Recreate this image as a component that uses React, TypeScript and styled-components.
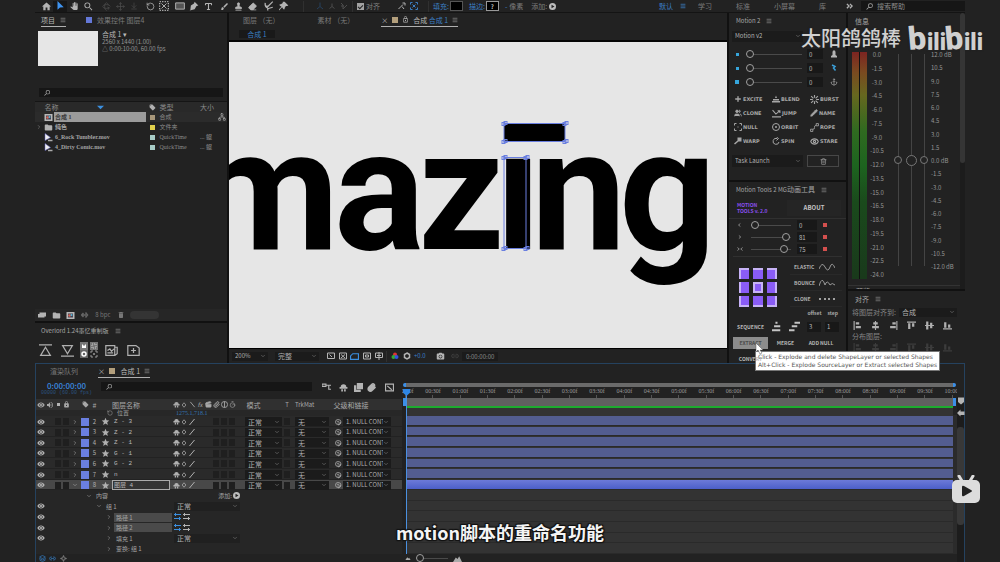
import React from "react";
import styled, { createGlobalStyle, css } from "styled-components";
import {
  MdHome, MdPanTool, MdSearch, MdBrush, MdVisibility, MdVolumeUp, MdLock, MdLockOpen,
  MdDelete, MdFolder, MdLocalOffer, MdPhotoCamera, MdStar,
} from "react-icons/md";
import {
  RotateCcw, Type, Stamp, Eraser, ChevronDown, ChevronRight, Menu, Link2, Paperclip, Layers,
  Rotate3d, Move, ArrowDownToLine, Clapperboard, Network, Plus, Trash2, Anchor, Users, Pencil,
  Eye, Sparkle, Timer,
} from "lucide-react";

const sans = `"Noto Sans CJK SC", "Noto Sans", sans-serif`;
const serif = `"Liberation Serif", "Noto Sans CJK SC", serif`;
const mono = `"Liberation Mono", "Noto Sans CJK SC", monospace`;

const Global = createGlobalStyle`
  * { box-sizing: border-box; }
  html, body, #root { height: 100%; }
  body { margin: 0; background: #222; color: #a0a0a0; font: 7px/8px ${sans}; overflow: hidden; }
  button, input, select { font: inherit; color: inherit; border: 0; padding: 0; margin: 0; background: none; border-radius: 0; }
  svg { display: block; flex: none; }
  h2 { margin: 0; font: inherit; }
`;

/* ---------- shared parts ---------- */
const Page = styled.div`
  position: relative; height: 100vh; padding: 0 35px; display: grid;
  grid-template-rows: 13px 350fr 199fr; grid-template-columns: minmax(0, 1fr); background: #222;
`;
const Panel = styled.section<{ $grow?: boolean }>`
  display: flex; flex-direction: column; min-height: 0; background: #222;
  ${(p) => p.$grow && css`flex: 1;`}
`;
const Column = styled.div`
  display: flex; flex-direction: column; gap: 2px; min-width: 0; min-height: 0;
`;
const TabBar = styled.div<{ $left?: number }>`
  display: flex; align-items: stretch; height: 15px; flex: none; padding-left: ${(p) => p.$left ?? 6}px;
`;
const Tab = styled.button<{ $active?: boolean; $gap?: number }>`
  display: flex; align-items: center; gap: 5px; white-space: nowrap; height: 14px;
  margin-right: ${(p) => p.$gap ?? 20}px; color: ${(p) => (p.$active ? "#b8b8b8" : "#7a7a7a")};
  border-bottom: 1px solid ${(p) => (p.$active ? "#b0b0b0" : "transparent")};
`;
const TightTab = styled(Tab)`gap: 4px;`;
const PanelTitle = styled.h2<{ $pad?: number }>`
  display: flex; align-items: center; gap: 6px; height: 15px; flex: none; white-space: nowrap;
  padding-left: ${(p) => p.$pad ?? 7}px; color: #a6a6a6;
`;
const Small = styled.span`font-size: 6px;`;
const Blue = styled.span`color: #3b7fc4;`;
const Chip = styled.span<{ $c: string; $s?: number }>`
  display: block; flex: none; width: ${(p) => p.$s ?? 6}px; height: ${(p) => p.$s ?? 6}px; background: ${(p) => p.$c};
`;
const IconButton = styled.button<{ $w?: number; $on?: boolean; $dim?: boolean }>`
  display: flex; align-items: center; justify-content: center; width: ${(p) => p.$w ?? 14}px; height: 11px; flex: none;
  color: ${(p) => (p.$dim ? "#4c4c4c" : "#b4b4b4")};
  ${(p) => p.$on && css`color: #3f93ef; background: #171717;`}
`;
const SelectWrap = styled.label<{ $h?: number }>`
  display: grid; align-items: center; min-width: 0; height: ${(p) => p.$h ?? 9}px; background: #1b1b1b;
  > * { grid-area: 1 / 1; }
  svg { justify-self: end; margin-right: 2px; pointer-events: none; }
`;
const NativeSelect = styled.select<{ $fs?: number }>`
  appearance: none; width: 100%; height: 100%; min-width: 0; padding: 0 8px 0 3px; outline: 0; overflow: hidden;
  font-size: ${(p) => p.$fs ?? 7}px; line-height: 8px; color: #b0b0b0;
`;
const Select = ({ value, label, h, fs }: { value: string; label: string; h?: number; fs?: number }) => (
  <SelectWrap $h={h}>
    <NativeSelect aria-label={label} $fs={fs} defaultValue={value}><option>{value}</option></NativeSelect>
    <ChevronDown size={6} color="#8a8a8a" />
  </SelectWrap>
);
const SearchBox = styled.label<{ $h?: number }>`
  display: flex; align-items: center; gap: 3px; height: ${(p) => p.$h ?? 9}px; padding-left: 4px; min-width: 0;
  background: #161616; color: #a8a8a8;
  input { flex: 1; min-width: 0; height: 100%; outline: 0; }
  input::placeholder { color: #8a8a8a; opacity: 1; }
  svg { transform: scaleX(-1); }
`;
const Range = styled.input.attrs({ type: "range" })`
  appearance: none; width: 100%; min-width: 0; height: 8px; outline: 0;
  &::-webkit-slider-runnable-track { height: 1px; background: #4a4a4a; }
  &::-webkit-slider-thumb {
    appearance: none; width: 8px; height: 8px; margin-top: -4px; border-radius: 50%;
    border: 1px solid #a0a0a0; background: #222;
  }
`;
const NumberField = styled.input`
  width: 100%; min-width: 0; height: 10px; background: #181818; padding-left: 2px; font-size: 6px; color: #b8b8b8; outline: 0;
`;
const MenuIcon = () => <Menu size={6} strokeWidth={3} color="#808080" />;

const Draw = ({ d, s = 9, fill, color, w = 2 }: { d: string; s?: number; fill?: boolean; color?: string; w?: number }) => (
  <svg width={s} height={s} viewBox="0 0 16 16" fill={fill ? "currentColor" : "none"}
    stroke={fill ? "none" : "currentColor"} strokeWidth={w} color={color}>
    <path d={d} />
  </svg>
);

/* ---------- top toolbar ---------- */
const Toolbar = styled.header`
  display: flex; align-items: center; height: 13px; padding-left: 4px; border-bottom: 1px solid #141414;
  white-space: nowrap; color: #7c7c7c;
`;
const ToolGroup = styled.div<{ $after?: number; $gap?: number }>`
  display: flex; align-items: center; gap: ${(p) => p.$gap ?? 0}px; margin-right: ${(p) => p.$after ?? 4}px; flex: none;
`;
const Divider = styled.i<{ $after?: number }>`
  width: 1px; height: 11px; background: #303030; margin-right: ${(p) => p.$after ?? 4}px; flex: none;
`;
const Check = styled.label`
  display: flex; align-items: center; gap: 2px; color: #808080;
  input { appearance: none; width: 7px; height: 7px; background: #a2a2a2; display: grid; place-items: center; }
  input:checked::after { content: ""; width: 4px; height: 2px; border: solid #222; border-width: 0 0 1px 1px; transform: rotate(-45deg); }
`;
const Swatch = styled.button`
  width: 13px; height: 10px; border: 1px solid #555; background: #000; font: bold 6px/7px ${sans}; color: #bbb;
`;
const StrokeSwatch = styled(Swatch)`border-color: #999;`;
const WorkspaceNav = styled.nav`
  margin-left: auto; display: flex; align-items: center; gap: 24px; margin-right: 20px;
  a { color: inherit; text-decoration: none; display: flex; align-items: center; gap: 7px; }
  a[aria-current] { color: #3b7fc4; margin-right: -12px; }
`;
const HelpSearch = styled.div`width: 104px; margin-left: 8px; flex: none;`;

const TopBar = () => (
  <Toolbar>
    <ToolGroup $after={4}>
      <IconButton aria-label="Home"><MdHome size={11} /></IconButton>
      <IconButton aria-label="Selection" $on>
        <Draw d="M4 0v14l4-3.500 6-.5z" s={10} fill />
      </IconButton>
      <IconButton aria-label="Hand"><MdPanTool size={8} /></IconButton>
      <IconButton aria-label="Zoom"><MdSearch size={11} /></IconButton>
    </ToolGroup>
    <ToolGroup $after={2}>
      <IconButton aria-label="Orbit" $dim><Rotate3d size={9} /></IconButton>
      <IconButton aria-label="Pan" $dim><Move size={9} /></IconButton>
      <IconButton aria-label="Dolly" $dim><ArrowDownToLine size={8} /></IconButton>
    </ToolGroup>
    <ToolGroup $after={2}>
      <IconButton aria-label="Rotate"><RotateCcw size={9} /></IconButton>
      <IconButton aria-label="Anchor point">
        <svg width="10" height="10" viewBox="0 0 16 16" fill="none" stroke="currentColor" strokeWidth="2">
          <rect x="1" y="1" width="14" height="14" strokeDasharray="2 2" /><path d="M4 4l8 8M12 4l-8 8" strokeWidth="1.500" />
        </svg>
      </IconButton>
    </ToolGroup>
    <ToolGroup $after={2}>
      <IconButton aria-label="Rectangle">
        <svg width="10" height="10" viewBox="0 0 16 16"><path d="M1 3h14v10H1z" fill="#555" stroke="#b4b4b4" strokeWidth="1.500" /></svg>
      </IconButton>
      <IconButton aria-label="Pen"><Draw d="M9 1l6 6-3 1-3 5-8 2 5-5a2 2 0 1 1 1 1l-5 4 1-8 5-3z" s={10} fill /></IconButton>
      <IconButton aria-label="Text"><Type size={9} strokeWidth={3} /></IconButton>
    </ToolGroup>
    <ToolGroup $after={2}>
      <IconButton aria-label="Brush"><MdBrush size={9} /></IconButton>
      <IconButton aria-label="Clone stamp"><Stamp size={9} fill="currentColor" /></IconButton>
      <IconButton aria-label="Eraser"><Eraser size={9} fill="currentColor" /></IconButton>
    </ToolGroup>
    <ToolGroup $after={12}>
      <IconButton aria-label="Roto brush" $w={15}><Draw d="M2 3q-1 7 4 8M5 10L14 1M7 12l7-2M2 8h4M6 11v4" s={10} /></IconButton>
      <IconButton aria-label="Puppet pin" $w={15}>
        <Draw d="M9 1l6 6-2 1-2 0-2 3 0 2-2 0-2-3-5 5-1-1 5-5-3-2 0-2 2 0 3-2 0-2z" s={10} fill />
      </IconButton>
    </ToolGroup>
    <Divider $after={10} />
    <ToolGroup $after={2}>
      <IconButton aria-label="Local axis" $dim $w={12}><Draw color="#27405c" d="M8 1v8M8 9L2 14M8 9l6 5" s={8} /></IconButton>
      <IconButton aria-label="World axis" $dim $w={12}><Draw d="M8 3v6M8 9L3 13M8 9l5 4" s={8} /></IconButton>
      <IconButton aria-label="View axis" $dim $w={12}><Draw d="M2 2l4 4v8l8-8M2 8h6" s={8} /></IconButton>
    </ToolGroup>
    <Divider $after={4} />
    <ToolGroup $after={15}>
      <Check><input type="checkbox" defaultChecked />对齐</Check>
    </ToolGroup>
    <ToolGroup $after={8}>
      <IconButton aria-label="Snap edges" $w={13}><Draw d="M1 14l5-5 4-4M9 2h5v5M8 9l4 5" s={8} /></IconButton>
      <IconButton aria-label="Snap features" $w={12}><Draw color="#3b7fc4" d="M1 5V1h4M15 5V1h-4M1 11v4h4M15 11v4h-4M5 5l6 6M11 5l-6 6" s={8} /></IconButton>
    </ToolGroup>
    <Divider $after={4} />
    <ToolGroup $after={6} $gap={1}><Blue>填充:</Blue><Swatch aria-label="Fill colour" /></ToolGroup>
    <ToolGroup $after={6} $gap={1}><Blue>描边:</Blue><StrokeSwatch aria-label="Stroke colour">?</StrokeSwatch></ToolGroup>
    <ToolGroup $after={8} $gap={2}><Blue>-</Blue>像素</ToolGroup>
    <ToolGroup $gap={2}>添加:<AddDot /></ToolGroup>
    <WorkspaceNav>
      <a href="#default" aria-current="page">默认<Menu size={6} strokeWidth={3} /></a>
      <a href="#learn">学习</a><a href="#standard">标准</a><a href="#small">小屏幕</a><a href="#library">库</a>
    </WorkspaceNav>
    <Draw d="M2 2l5 5-5 5M9 2l5 5-5 5" s={7} color="#b4b4b4" w={3} />
    <HelpSearch>
      <SearchBox $h={10}><MdSearch size={9} /><input aria-label="搜索帮助" placeholder="搜索帮助" /></SearchBox>
    </HelpSearch>
  </Toolbar>
);
const AddDot = () => (
  <svg width="7" height="7" viewBox="0 0 14 14"><circle cx="7" cy="7" r="7" fill="#bcbcbc" /><path d="M5 3.500v7L11 7z" fill="#222" /></svg>
);

/* ---------- project column ---------- */
const Workspace = styled.main`
  display: grid; grid-template-columns: 192px minmax(0, 1fr) 117px 117px; gap: 2px; background: #111; min-height: 0;
`;
const Preview = styled.div`
  display: flex; gap: 4px; padding: 3px 0 0 3px; height: 60px; flex: none; font-size: 6px; line-height: 7px;
`;
const Thumb = styled.div`width: 60px; height: 35px; background: #e6e6e6;`;
const Meta = styled.div`color: #959595; strong { font-weight: 400; color: #b8b8b8; font-size: 7px; }`;
const ProjectSearch = styled.div`padding: 0 4px 4px; border-bottom: 1px solid #151515; flex: none;`;
const FileTable = styled.table`
  border-collapse: collapse; table-layout: fixed; width: 100%; color: #8a8a8a;
  th { font-weight: 400; text-align: left; height: 10px; padding: 0; background: #292929; }
  td { height: 10px; padding: 0; white-space: nowrap; font: 6px/10px ${serif}; }
  tr[aria-selected="true"] { background: #2b2b2b; }
  svg { margin: auto; }
`;
const FileName = styled.div<{ $sel?: boolean }>`
  padding-left: 1px; height: 10px; font-weight: 700; color: #a4a4a4; font-size: 6px; line-height: 10px;
  ${(p) => p.$sel && css`background: #9b9b9b; color: #3a3a3a;`}
`;
const ChipCell = styled.td`> span { margin: auto; }`;
const HeadName = styled.span`display: flex; align-items: center; justify-content: space-between; padding-right: 3px;`;
const files = [
  { name: "合成 1", type: "合成", c: "#a8977a", icon: "comp", sel: true, size: "" },
  { name: "纯色", type: "文件夹", c: "#e0d04c", icon: "folder", sel: false, size: "" },
  { name: "6_Rock Tumbler.mov", type: "QuickTime", c: "#a6cbc6", icon: "clip", sel: false, size: "... 鲲" },
  { name: "4_Dirty Comic.mov", type: "QuickTime", c: "#a6cbc6", icon: "clip", sel: false, size: "... 鲲" },
];
const CompIcon = () => (
  <svg width="9" height="9" viewBox="0 0 18 18"><rect x="1" y="2" width="16" height="14" fill="#b8b8b8" /><rect x="4" y="5" width="10" height="8" fill="#445" /><circle cx="7" cy="9" r="2.500" fill="#d65" /><circle cx="11" cy="8" r="2" fill="#5bd" /></svg>
);
const ClipIcon = () => (
  <svg width="9" height="9" viewBox="0 0 18 18"><path d="M2 1l11 8-11 6z" fill="#eee" stroke="#66c" /><path d="M8 15h9" stroke="#aaa" strokeWidth="3" /></svg>
);
const StatusBar = styled.div`
  margin-top: auto; display: flex; align-items: center; gap: 4px; height: 12px; padding: 0 2px; background: #262626; font-size: 6px; color: #777;
`;
const Thumbbar = styled.i`width: 29px; height: 8px; border-radius: 4px; background: #343434;`;
const OverlordRow = styled.div`
  display: flex; align-items: center; gap: 8px; padding: 2px 0 0 3px; height: 22px; color: #b0b0b0;
  button { width: 14px; display: flex; justify-content: center; }
`;
const OverlordPanel = styled(Panel)`height: 40px; flex: none;`;

const ProjectColumn = () => (
  <Column>
    <Panel $grow>
      <TabBar>
        <Tab $active>项目<MenuIcon /></Tab>
        <Tab><Chip $c="#6478d8" />效果控件 图层4</Tab>
      </TabBar>
      <Preview>
        <Thumb />
        <Meta><strong>合成 1 ▾</strong><br />2560 x 1440 (1.00)<br />△ 0:00:10:00, 60.00 fps</Meta>
      </Preview>
      <ProjectSearch><SearchBox><MdSearch size={8} /><input aria-label="Search project" /></SearchBox></ProjectSearch>
      <FileTable>
        <colgroup><col width="8" /><col width="11" /><col width="92" /><col width="12" /><col width="42" /><col width="16" /><col /></colgroup>
        <thead><tr>
          <th /><th colSpan={2}><HeadName>&nbsp;名称<Draw d="M0 4h16L8 12z" fill s={7} color="#3b8fe0" /></HeadName></th>
          <th><MdLocalOffer size={7} color="#b0b0b0" /></th><th>&nbsp;类型</th><th colSpan={2}>大小</th>
        </tr></thead>
        <tbody>
          {files.map((f) => (
            <tr key={f.name} aria-selected={f.sel}>
              <td>{f.icon === "folder" && <ChevronRight size={6} />}</td>
              <td>{f.icon === "comp" ? <CompIcon /> : f.icon === "folder" ? <MdFolder size={9} color="#b0b0b0" /> : <ClipIcon />}</td>
              <td><FileName $sel={f.sel}>{f.name}</FileName></td>
              <ChipCell><Chip $c={f.c} $s={5} /></ChipCell>
              <td>&nbsp;{f.type}</td>
              {f.size ? <td colSpan={2}>{f.size}</td> : <><td /><td>{f.sel && <Network size={8} color="#aaa" />}</td></>}
            </tr>
          ))}
        </tbody>
      </FileTable>
      <StatusBar>
        <IconButton $w={10} aria-label="Interpret footage"><Draw d="M0 13V6h3V3h13v8h-3v2z" fill s={8} /></IconButton>
        <IconButton $w={10} aria-label="New folder"><MdFolder size={9} /></IconButton>
        <IconButton $w={10} aria-label="New composition"><CompIcon /></IconButton>
        <IconButton $w={11} aria-label="Settings" $dim><Draw d="M1 8h9M5 4l-4 4 4 4M9 3l4 5-4 5" s={8} w={3} color="#666" /></IconButton>
        &nbsp;8 bpc&nbsp;
        <IconButton $w={10} aria-label="Delete"><MdDelete size={8} color="#777" /></IconButton>
        <Thumbbar />
      </StatusBar>
    </Panel>
    <OverlordPanel>
      <PanelTitle $pad={6}><Small>Overlord 1.24墨忆重制版</Small><MenuIcon /></PanelTitle>
      <OverlordRow>
        <button aria-label="Push"><Draw d="M0 1h16M8 4l6 10H2z" s={13} w={1.5} /></button>
        <button aria-label="Pull"><Draw d="M0 15h16M8 12l6-10H2z" s={13} w={1.5} /></button>
        <button aria-label="Options">
          <svg width="18" height="16" viewBox="0 0 18 16">
            <rect width="8" height="8" fill="#777" /><rect x="10" width="8" height="8" fill="#777" /><rect y="8" width="8" height="8" fill="#666" />
            <path d="M2 6V2l2 2 2-2v4z" fill="#fff" /><circle cx="4" cy="12" r="2" fill="none" stroke="#fff" strokeWidth="1.500" />
            <rect x="12" y="2" width="4" height="4" fill="none" stroke="#ccc" strokeDasharray="1 1" /><path d="M11 11V9h2M15 9h2v2M11 13v2h2M15 15h2v-2M14 11v2M13 12h2" stroke="#999" fill="none" />
          </svg>
        </button>
        <button aria-label="Rig"><Draw d="M1 2h11v12H1zM12 4h3v8l-3 2M3 8l3-2 2 3 3-3M3 11h7" s={13} w={1.5} /></button>
        <button aria-label="Split"><Draw d="M1 2h10l4 3v9H1zM8 5v6M5 8h6" s={13} w={1.5} /></button>
      </OverlordRow>
    </OverlordPanel>
  </Column>
);

/* ---------- composition viewer ---------- */
const CrumbRow = styled.div`
  display: flex; padding: 2px 0 0 10px; height: 14px; border-bottom: 2px solid #060606; flex: none;
  button { width: 36px; height: 8px; background: #191919; color: #3b7fc4; line-height: 8px; }
`;
const Viewer = styled.div`
  flex: 1; min-height: 0; background: #e6e6e6; border-bottom: 1px solid #000;
  svg { width: 100%; height: 100%; }
`;
const Artwork = styled.text`font: 700 170px Roboto, sans-serif; fill: #000;`;
const ViewerBar = styled.div`
  display: flex; align-items: center; gap: 3px; height: 14px; flex: none; padding-left: 3px; font-size: 6px; color: #8c8c8c;
`;
const Slot = styled.div<{ $w: number }>`width: ${(p) => p.$w}px; margin-right: 4px; flex: none;`;
const TimeSlot = styled.output`background: #1b1b1b; padding: 0 4px; line-height: 9px; font-size: 6px;`;

const Handles = ({ x, y, w, h }: { x: number; y: number; w: number; h: number }) => (
  <g fill="none" stroke="#6a7fe0">
    <rect x={x} y={y} width={w} height={h} />
    {[[x, y], [x + w, y], [x, y + h], [x + w, y + h]].map(([cx, cy]) => (
      <g key={`${cx}-${cy}`}>
        <rect x={cx - 2} y={cy - 1} width="3" height="3" /><rect x={cx} y={cy - 2} width="3" height="3" />
      </g>
    ))}
  </g>
);

const ViewerColumn = () => (
  <Panel>
    <TabBar $left={14}>
      <Tab $gap={38}>图层 （无）</Tab>
      <Tab $gap={27}>素材 （无）</Tab>
      <TightTab $active>×<Chip $c="#b39f7c" /><MdLockOpen size={7} /><span>合成 <Blue>合成 1</Blue></span><MenuIcon /></TightTab>
    </TabBar>
    <CrumbRow><button>合成 1</button></CrumbRow>
    <Viewer>
      <svg viewBox="0 0 498 307" preserveAspectRatio="xMinYMid slice">
        <Artwork x="-37 105 189 266 302 390" y="207">mazıng</Artwork>
        <rect x="275" y="82" width="61" height="18" rx="3" />
        <Handles x={275} y={82} w={61} h={18} />
        <Handles x={275} y={116} w={22} h={91} />
      </svg>
    </Viewer>
    <ViewerBar>
      <Slot $w={36}><Select label="Magnification" value="200%" fs={6} /></Slot>
      <Slot $w={44}><Select label="Resolution" value="完整" /></Slot>
      <IconButton $w={9} aria-label="Region"><Draw d="M1 2h14v11H1zM5 5l5 5" s={8} /></IconButton>
      <IconButton $w={9} aria-label="Transparency"><Draw d="M1 2h14v12H1zM4 5l8 7M12 5l-8 7" s={8} /></IconButton>
      <IconButton $w={9} aria-label="Mask"><Draw color="#3b8fe0" d="M1 13V7l4-4h10v10z" s={9} /></IconButton>
      <IconButton $w={9} aria-label="Safe area"><Draw d="M1 2h14v12H1zM5 6h6v4H5z" s={8} /></IconButton>
      <IconButton $w={9} aria-label="Guides"><Draw d="M1 2h14v9H1zM8 0v16M4 7h8" s={8} /></IconButton>
      <Divider $after={0} />
      <IconButton $w={9} aria-label="Channels">
        <svg width="8" height="8" viewBox="0 0 16 16"><circle cx="8" cy="5" r="4" fill="#d33" /><circle cx="5" cy="10" r="4" fill="#3a3" /><circle cx="11" cy="10" r="4" fill="#35d" /></svg>
      </IconButton>
      <IconButton $w={9} aria-label="Exposure"><Draw d="M8 2l5 3v6l-5 3-5-3V5z" s={8} w={3} /></IconButton>
      <Blue>+0.0</Blue>&nbsp;
      <IconButton aria-label="Snapshot"><MdPhotoCamera size={9} /></IconButton>
      <IconButton $w={9} $dim aria-label="Show snapshot"><Link2 size={8} /></IconButton>
      <TimeSlot>0:00:00:00</TimeSlot>
    </ViewerBar>
  </Panel>
);

/* ---------- motion column ---------- */
const MotionPanel = styled(Panel)`height: 167px; flex: none;`;
const ControlRow = styled.div<{ $after?: number }>`
  display: grid; grid-template-columns: 71px 32px; gap: 4px; padding-left: 3px; margin: 2px 0 ${(p) => p.$after ?? 6}px; height: 12px; align-items: center;
`;
const EaseRow = styled.div`
  display: grid; grid-template-columns: 8px 56px 16px 12px; column-gap: 5px; height: 14px; padding-left: 4px; align-items: center; justify-items: center; flex: none;
`;
const ActionGrid = styled.div`
  display: grid; grid-template-columns: 38px 38px 38px; grid-auto-rows: 14px; margin: 3px 0 5px; padding-left: 5px;
`;
const ActionButton = styled.button`
  display: flex; align-items: center; gap: 1px; font: 700 5px/6px "DejaVu Sans", sans-serif; color: #a6a6a6; white-space: nowrap;
`;
const OutlineButton = styled.button`
  display: flex; align-items: center; justify-content: center; height: 12px; border: 1px solid #474747; color: #aaa;
`;
const actions: [string, React.ReactNode][] = [
  ["EXCITE", <Plus size={8} strokeWidth={4} />],
  ["BLEND", <Draw d="M0 12h16v3H0zM2 8h12v3H2zM6 6l2-5 2 5z" fill s={8} />],
  ["BURST", <Draw d="M8 0v5M8 11v5M0 8h5M11 8h5M2 2l4 4M10 10l4 4M14 2l-4 4M6 10l-4 4" s={9} />],
  ["CLONE", <Users size={8} fill="currentColor" />],
  ["JUMP", <Draw d="M1 2l6 7 7-6M10 3h4v4M0 14h16" s={9} />],
  ["NAME", <Pencil size={8} fill="currentColor" />],
  ["NULL", <Draw d="M1 5V1h4M15 5V1h-4M1 11v4h4M15 11v4h-4M7 8h2" s={8} />],
  ["ORBIT", <Draw d="M8 1a7 7 0 0 1 0 14M8 15A7 7 0 0 1 8 1M6 8h4M8 6v4" s={8} />],
  ["ROPE", <Draw d="M1 15v-4h4v4zM11 5V1h4v4zM5 11q4 0 3-3t3-4" s={9} w={1.5} />],
  ["WARP", <Draw d="M7 1h8v8H9l-7 6-2-2 7-6z" fill s={8} />],
  ["SPIN", <Draw d="M14 10A6 6 0 1 1 10 3M9 0l4 3-4 4" s={8} />],
  ["STARE", <Eye size={9} strokeWidth={3} />],
];

const ToolsPanel = styled(Panel)`flex: 1; background: #222; position: relative; z-index: 2;`;
const ToolsHead = styled.div`
  display: grid; grid-template-columns: 54px 54px; height: 22px; padding: 1px 4px; align-items: center;
  font-weight: 700; font-size: 6px; line-height: 5px; border-bottom: 1px solid #303030; flex: none;
  button { font-weight: 700; height: 16px; background: #252525; color: #c4c4c4; }
`;
const Brand = styled.div`color: #8a4fee; font-weight: 700; font-size: 5px; line-height: 6px; padding-left: 4px; white-space: nowrap;`;
const ToolRow = styled.div`
  display: grid; grid-template-columns: 8px 40px 20px 6px; column-gap: 6px; height: 12px; align-items: center; padding-left: 8px; flex: none;
`;
const AnchorArea = styled.div`
  display: grid; grid-template-columns: 57px 52px; border-top: 1px solid #303030; margin: 1px 4px 0; flex: none; height: 54px;
`;
const AnchorGrid = styled.div`
  display: grid; grid-template-columns: repeat(3, 10px); grid-auto-rows: 11px; gap: 3px 4px; padding: 11px 0 0 6px;
`;
const AnchorCell = styled.button<{ $edges: string }>`
  background: #8a5cf6; border-style: solid; border-color: #c7b3f7; border-width: ${(p) => p.$edges};
`;
const Curves = styled.div`display: flex; flex-direction: column; padding-top: 2px;`;
const CurveButton = styled.button`
  display: flex; align-items: center; justify-content: space-between; height: 16px; padding: 0 7px 0 4px;
  font: 700 5px/6px ${sans}; color: #b0b0b0; border-bottom: 1px solid #292929;
`;
const StepLabels = styled.div`display: flex; justify-content: flex-end; gap: 6px; padding-right: 8px; font: 700 5px/6px ${sans}; color: #aaa; height: 8px; flex: none;`;
const SeqRow = styled.div`
  display: grid; grid-template-columns: 35px 13px 14px 14px 14px; column-gap: 4px; padding-left: 4px; height: 17px; align-items: center; flex: none;
`;
const FlatRow = styled.div`
  display: grid; grid-template-columns: 35px 35px 36px; height: 16px; align-items: center; padding-left: 4px; flex: none;
`;
const FlatButton = styled.button<{ $hover?: boolean }>`
  position: relative; height: 12px; font: 700 5px/6px ${sans}; color: #b8b8b8; white-space: nowrap;
  ${(p) => p.$hover && css`background: #8c8c8c; color: #4a4a4a;`}
`;
const Tip = styled.span`
  position: absolute; left: 22px; top: 14px; padding: 1px 2px; background: #fff; border: 1px solid #777;
  color: #555; font: 400 6px/8px "DejaVu Sans", sans-serif; text-align: left; white-space: nowrap;
`;
const Cursor = styled.span`position: absolute; left: 22px; top: 6px; z-index: 1;`;
const edges = ["2px 0 0 2px", "2px 0 0 0", "2px 2px 0 0", "0 0 0 2px", "2px", "0 2px 0 0", "0 0 2px 2px", "0 0 2px 0", "0 2px 2px 0"];

const MotionColumn = () => (
  <Column>
    <MotionPanel>
      <PanelTitle><Small>Motion 2</Small><MenuIcon /></PanelTitle>
      <ControlRow $after={5}><Select h={11} label="Tool" value="Motion v2" fs={6} /></ControlRow>
      {["Ease in", "Ease both", "Ease out"].map((n, i) => (
        <EaseRow key={n}>
          <Chip $c="#36a6dc" $s={i === 2 ? 4 : 3} />
          <Range aria-label={n} defaultValue={0} />
          <NumberField aria-label={`${n} value`} defaultValue="0" />
          {i === 0 ? <Draw d="M6 1h4l1 3v6l3 2v3H2v-3l3-2V4z" fill s={8} color="#b4b4b4" /> : i === 1 ? <Draw d="M4 2l6 3-3 3 4 5" s={8} color="#3b9fd8" w={3} /> : <Anchor size={8} />}
        </EaseRow>
      ))}
      <ActionGrid>{actions.map(([n, icon]) => <ActionButton key={n}>{icon}{n}</ActionButton>)}</ActionGrid>
      <ControlRow><Select h={12} label="Task" value="Task Launch" fs={6} /><OutlineButton aria-label="Delete task"><Trash2 size={7} /></OutlineButton></ControlRow>
    </MotionPanel>
    <ToolsPanel>
      <PanelTitle><span><Small>Motion Tools 2 MG</Small>动画工具</span><MenuIcon /></PanelTitle>
      <ToolsHead><Brand>MOTION<br />TOOLS v. 2.0</Brand><button>ABOUT</button></ToolsHead>
      <ToolRow><Draw d="M9 4L4 8l5 4" s={6} /><Range aria-label="Out" defaultValue={0} /><NumberField aria-label="Out value" defaultValue="0" /><Chip $c="#d4504e" $s={4} /></ToolRow>
      <ToolRow><Draw d="M5 4l5 4-5 4" s={6} /><Range aria-label="In" defaultValue={96} /><NumberField aria-label="In value" defaultValue="81" /><Chip $c="#d4504e" $s={4} /></ToolRow>
      <ToolRow><Draw d="M1 4l5 4-5 4M15 4l-5 4 5 4" s={6} /><Range aria-label="Both" defaultValue={90} /><NumberField aria-label="Both value" defaultValue="75" /><Chip $c="#d4504e" $s={4} /></ToolRow>
      <AnchorArea>
        <AnchorGrid>{edges.map((e, i) => <AnchorCell key={i} $edges={e} aria-label={`Anchor ${i + 1}`} />)}</AnchorGrid>
        <Curves>
          <CurveButton>ELASTIC<svg width="16" height="8" viewBox="0 0 16 8" fill="none" stroke="#999"><path d="M0 6q3-8 6-2t5 0 5 1" /></svg></CurveButton>
          <CurveButton>BOUNCE<svg width="16" height="8" viewBox="0 0 16 8" fill="none" stroke="#999"><path d="M0 7q3-11 6-1 2-6 5 0 2-3 5 0" /></svg></CurveButton>
          <CurveButton>CLONE<svg width="16" height="8" viewBox="0 0 16 8" fill="#ccc"><circle cx="1" cy="4" r="1" /><circle cx="6" cy="4" r="1" /><circle cx="10" cy="4" r="1" /><circle cx="15" cy="4" r="1" /></svg></CurveButton>
        </Curves>
      </AnchorArea>
      <StepLabels><span>offset</span><span>step</span></StepLabels>
      <SeqRow>
        <FlatButton>SEQUENCE</FlatButton>
        <Draw d="M5 1h3v3H5zM3 6h9v3H3zM0 12h12v3H0z" fill s={11} color="#c4c4c4" />
        <Draw d="M8 1h8v3H8zM4 6h8v3H4zM0 12h8v3H0z" fill s={11} color="#c4c4c4" />
        <NumberField aria-label="Offset" defaultValue="3" /><NumberField aria-label="Step" defaultValue="1" />
      </SeqRow>
      <FlatRow>
        <FlatButton $hover>
          EXTRACT
          <Cursor><svg width="9" height="11" viewBox="0 0 9 11"><path d="M1 0v9l2-2 2 4 2-1-2-3h3z" fill="#fff" stroke="#555" strokeWidth=".5" /></svg></Cursor>
          <Tip>Click - Explode and delete ShapeLayer or selected Shapes<br />Alt+Click - Explode SourceLayer or Extract selected Shapes</Tip>
        </FlatButton>
        <FlatButton>MERGE</FlatButton><FlatButton>ADD NULL</FlatButton>
      </FlatRow>
      <FlatRow><FlatButton>CONVERT</FlatButton></FlatRow>
    </ToolsPanel>
  </Column>
);

/* ---------- audio + align column ---------- */
const AudioBody = styled.div`
  display: grid; grid-template-columns: 15px 26px 38px 22px 1fr; flex: 1; min-height: 0; padding: 24px 1px 0 4px; font-size: 6px; line-height: 6px;
`;
const AudioPanel = styled(Panel)`flex: 1; position: relative; border-right: 5px solid #1c1c1c;`;
const ScrollThumb = styled.i`position: absolute; right: -5px; top: 0; width: 5px; height: 150px; border-radius: 3px; background: #353535;`;
const Meter = styled.div`
  display: grid; grid-template-columns: 1fr 1fr; gap: 1px; height: 227px; background: #111;
  i { background: linear-gradient(#7c2421, #7a4a20 9%, #66671f 19%, #2f6a20 35%, #1d641f 50%, #1a4a1c 66%, #19391b); }
`;
const Scale = styled.ol<{ $h: number; $right?: boolean }>`
  list-style: none; margin: 0; padding: 0; height: ${(p) => p.$h}px; display: flex; flex-direction: column; justify-content: space-between;
  white-space: nowrap; padding-left: ${(p) => (p.$right ? 0 : 3)}px; color: #959595;
  li { text-align: ${(p) => (p.$right ? "left" : "center")}; width: ${(p) => (p.$right ? "auto" : "14px")}; }
`;
const Faders = styled.div`display: flex; justify-content: space-between; height: 215px; padding: 2px 2px 0 0;`;
const Fader = styled.input.attrs({ type: "range" })<{ $big?: boolean }>`
  appearance: none; writing-mode: vertical-lr; direction: rtl; width: 10px; height: 212px;
  &::-webkit-slider-runnable-track { width: 1px; background: #444; }
  &::-webkit-slider-thumb {
    appearance: none; width: ${(p) => (p.$big ? 11 : 8)}px; height: ${(p) => (p.$big ? 11 : 8)}px;
    margin-left: ${(p) => (p.$big ? -5 : -4)}px; border-radius: 50%; border: 1px solid #777; background: #222;
  }
`;
const ClippedTitle = styled.div`height: 4px; overflow: hidden; padding-left: 8px; border-top: 1px solid #333; line-height: 10px;`;
const AlignPanel = styled(Panel)`height: 72px; flex: none; padding-left: 4px; color: #858585;`;
const AlignTarget = styled.div`display: grid; grid-template-columns: 47px 1fr; align-items: center; padding-right: 8px; height: 12px;`;
const AlignRow = styled.div<{ $dim?: boolean }>`
  display: flex; gap: 9px; padding: 3px 0 2px 1px; color: ${(p) => (p.$dim ? "#3c3c3c" : "#b0b0b0")};
  button { display: flex; }
`;
const aligns = [
  "M1 0h2v16H1zM5 2h6v4H5zM5 9h9v4H5z", "M7 0h2v16H7zM4 2h8v4H4zM2 9h12v4H2z", "M13 0h2v16h-2zM6 2h6v4H6zM2 9h10v4H2z",
  "M0 1h16v2H0zM2 4h4v10H2zM9 4h4v6H9z", "M0 7h16v2H0zM2 1h4v14H2zM9 3h4v10H9z", "M0 13h16v2H0zM2 2h4v10H2zM9 6h4v6H9z",
];
const left = ["0.0", "-1.5", "-3.0", "-4.5", "-6.0", "-7.5", "-9.0", "-10.5", "-12.0", "-13.5", "-15.0", "-16.5", "-18.0", "-19.5", "-21.0", "-22.5", "-24.0"];
const right = ["12.0 dB", "10.5", "9.0", "7.5", "6.0", "4.5", "3.0", "1.5", "0.0 dB", "-1.5", "-3.0", "-4.5", "-6.0", "-7.5", "-9.0", "-10.5", "-12.0 dB"];

const AudioColumn = () => (
  <Column>
    <AudioPanel>
      <ScrollThumb />
      <PanelTitle>信息</PanelTitle>
      <AudioBody>
        <Meter><i /><i /></Meter>
        <Scale $h={226}>{left.map((t) => <li key={t}>{t}</li>)}</Scale>
        <Faders><Fader aria-label="Left" defaultValue={50} /><Fader $big aria-label="Both channels" defaultValue={50} /><Fader aria-label="Right" defaultValue={50} /></Faders>
        <Scale $h={218} $right>{right.map((t) => <li key={t}>{t}</li>)}</Scale>
      </AudioBody>
      <ClippedTitle>预览</ClippedTitle>
    </AudioPanel>
    <AlignPanel>
      <PanelTitle $pad={3}>对齐<MenuIcon /></PanelTitle>
      <AlignTarget>将图层对齐到:<Select label="将图层对齐到" value="合成" /></AlignTarget>
      <AlignRow>{aligns.map((d, i) => <button key={d} aria-label={`Align ${i + 1}`}><Draw d={d} fill s={9} /></button>)}</AlignRow>
      分布图层:
      <AlignRow $dim>{aligns.map((d, i) => <button key={d} aria-label={`Distribute ${i + 1}`}><Draw d={d} fill s={9} /></button>)}</AlignRow>
    </AlignPanel>
  </Column>
);

/* ---------- timeline ---------- */
const Timeline = styled.section`
  display: grid; grid-template-columns: 366px minmax(0, 1fr); border: solid #25425f; border-width: 1px 1px 0; min-height: 0; background: #222;
`;
const LayerSide = styled.div`display: flex; flex-direction: column; min-height: 0; min-width: 0;`;
const TimeHead = styled.div`
  display: grid; grid-template-columns: 65px 211px 1fr; height: 20px; align-items: start; padding-top: 3px; flex: none;
`;
const Timecode = styled.div`
  padding-left: 11px; color: #3b8be0; font-weight: 500; font-size: 8px; line-height: 8px; white-space: nowrap;
  small { display: block; font: 5px/7px ${mono}; color: #2b5280; margin-left: -6px; }
`;
const Toggles = styled.div`display: flex; padding-left: 7px; gap: 2px;`;
const layerGrid = css`
  display: grid; align-items: center; justify-items: center; min-height: 0;
  grid-template-columns: 10px 8px 8px 8px 10px 10px 9px 13px 60px repeat(8, 8px) 9px 37px 10px 3px 34px 3px 11px 48px 1fr;
`;
const LayerHeader = styled.div`${layerGrid} height: 11px; background: #303030; color: #a8a8a8; flex: none; white-space: nowrap;`;
const CutRow = styled.div`
  height: 6px; display: flex; align-items: flex-start; padding-left: 71px; overflow: hidden; background: #272727; font: 6px/6px ${serif}; flex: none; gap: 4px;
  span:last-child { margin-left: 43px; color: #3572b0; }
`;
const Rows = styled.div`flex: 1; min-height: 0; display: grid; grid-template-rows: repeat(13, minmax(0, 1fr));`;
const LayerRow = styled.div<{ $sel?: boolean }>`
  ${layerGrid} background: ${(p) => (p.$sel ? "#484848" : "#2a2a2a")}; color: #b0b0b0; border-bottom: 1px solid #222;
  label { width: 100%; }
`;
const LayerName = styled.span<{ $edit?: boolean }>`
  justify-self: start; width: 58px; padding-left: 2px; font: 6px/9px ${mono}; color: #bababa;
  ${(p) => p.$edit && css`border: 1px solid #aaa; background: #333; padding-left: 1px; height: 10px;`}
`;
const Box = styled.i`width: 6px; height: 7px; background: #1f1f1f;`;
const Start = styled.span<{ $span?: number }>`justify-self: start; ${(p) => p.$span && css`grid-column: span ${p.$span};`}`;
const PropRow = styled.div`
  display: grid; grid-template-columns: 10px 126px 68px 1fr; align-items: center; justify-items: stretch; min-height: 0; background: #262626; color: #a4a4a4;
`;
const PropName = styled.span<{ $depth: number; $sel?: boolean }>`
  display: flex; align-items: center; gap: 2px; padding-left: ${(p) => p.$depth * 10}px; white-space: nowrap;
  span { padding: 0 2px; line-height: 9px; font-size: 6px; flex: 1; ${(p) => p.$sel && css`background: #4a4a4a;`} }
`;
const PropValue = styled.span`display: flex; align-items: center; gap: 1px; padding-left: 2px; label { flex: 1; background: #202020; }`;
const AddCell = styled.span`display: flex; align-items: center; gap: 1px; justify-content: flex-end; white-space: nowrap; font-size: 6px;`;
const Footer = styled.div`display: flex; align-items: center; height: 8px; padding-left: 2px; gap: 2px; flex: none; background: #222;`;

const TrackSide = styled.div`
  position: relative; display: grid; grid-template-columns: minmax(0, 1fr) 7px; min-height: 0; padding-top: 19px;
`;
const TrackMain = styled.div`display: flex; flex-direction: column; min-height: 0; min-width: 0;`;
const NavBar = styled.div`height: 4px; margin: 0 1px; border: solid #3b8fe8; border-width: 0 3px; border-radius: 3px; background: #6a6a6a; flex: none;`;
const Ruler = styled.div`overflow: hidden; height: 11px; flex: none;`;
const RulerInner = styled.div`
  display: grid; grid-template-columns: repeat(21, 1fr); margin: 0 -9px 0 -10px; height: 11px; font: 6px/9px ${serif}; color: #9a9a9a; text-align: center;
  span { white-space: nowrap; background: linear-gradient(#555, #555) center bottom / 1px 3px no-repeat; }
`;
const WorkArea = styled.div`height: 8px; margin: 0 1px 0 1px; border: solid #3b8fe8; border-width: 0 3px; background: #606060; flex: none;`;
const Cache = styled.div`height: 2px; margin: 0 4px; background: #1dab2f; flex: none;`;
const TrackGap = styled.div`height: 7px; margin: 0 4px; background: #333; flex: none;`;
const Tracks = styled(Rows)`margin: 0 0 0 4px; padding-right: 4px; background: #2b2b2b;`;
const Track = styled.div`background: #333; border-bottom: 1px solid #2a2a2a; padding-top: 1px; min-height: 0;`;
const Bar = styled.div<{ $sel?: boolean }>`
  height: 100%; background: ${(p) => (p.$sel ? "linear-gradient(#6c7ad8, #4c5fc8)" : "#535d90")};
`;
const Playhead = styled.div`
  position: absolute; left: 4px; top: 25px; bottom: 8px; width: 1px; background: #4a90e0;
  &::before { content: ""; position: absolute; left: -3px; top: 0; width: 7px; height: 7px; background: #2f86e4; clip-path: polygon(0 0, 100% 0, 100% 55%, 50% 100%, 0 55%); }
`;
const TrackScroll = styled.div`
  background: #1c1c1c; display: flex; flex-direction: column; align-items: center; margin-top: 14px; color: #b4b4b4; gap: 4px;
  i { width: 7px; height: 98px; border-radius: 3px; background: #383838; margin-top: 6px; }
`;
const ZoomRow = styled(Footer)`padding-left: 3px; gap: 5px; color: #aaa; label { width: 32px; display: flex; }`;

const layers = ["Z - 3", "Z - 2", "Z - 1", "G - 1", "G - 2", "n", "图层 4"];
const times = Array.from({ length: 21 }, (_, i) => `${String(Math.floor(i / 2)).padStart(2, "0")}:${i % 2 ? "30" : "00"}f`);
const Spiral = () => <Draw d="M13 8A5 5 0 1 1 8 3q6 0 6 5t-6 6M6 8a2 2 0 1 1 4 1q-1 2-3 1" s={8} w={1.5} />;
const Shy = () => <Draw d="M3 7a5 5 0 0 1 10 0zM1 7h14v3H1zM4 11h3v4H4zM9 11h3v4H9z" fill s={7} />;
const Toggle = () => <Draw d="M8 2l5 6-5 6-5-6z" s={6} />;
const EyeButton = () => <IconButton $w={10} aria-label="Visibility"><MdVisibility size={8} /></IconButton>;
const PathIcon = ({ c }: { c: string }) => <Draw d="M0 3h14M3 0v6M0 11h14M11 8v6" s={8} color={c} />;

const Prop = ({ depth, name, eye, open, sel, value }: { depth: number; name: string; eye?: boolean; open?: boolean; sel?: boolean; value?: React.ReactNode }) => (
  <PropRow>
    {eye ? <EyeButton /> : <i />}
    <PropName $depth={depth} $sel={sel}>{open ? <ChevronDown size={6} /> : <ChevronRight size={6} />}<span>{name}</span></PropName>
    {value}
  </PropRow>
);

const TimelinePanel = () => (
  <Timeline>
    <LayerSide>
      <TabBar $left={14}>
        <Tab>渲染队列</Tab>
        <TightTab $active>×<Chip $c="#b39f7c" />&nbsp;合成 1<MenuIcon /></TightTab>
      </TabBar>
      <TimeHead>
        <Timecode>0:00:00:00<small>00000 (60.00 fps)</small></Timecode>
        <SearchBox><MdSearch size={8} /><input aria-label="Search layers" /></SearchBox>
        <Toggles>
          <IconButton aria-label="Mini flowchart"><Draw d="M0 2h7v4H0zM7 4h5v7h4M12 4h4" s={9} /></IconButton>
          <IconButton $w={16} aria-label="Hide shy"><Draw d="M3 7a5 5 0 0 1 10 0zM1 7h14v3H1zM4 11h3v4H4zM9 11h3v4H9z" fill s={9} /></IconButton>
          <IconButton $w={10} aria-label="Frame blending"><Draw d="M5 0h11v11H5zM0 4h4v8h8v4H0z" fill s={9} /></IconButton>
          <IconButton $w={13} aria-label="Motion blur"><Paperclip size={9} strokeWidth={4} /></IconButton>
          <IconButton $w={18} aria-label="Graph editor"><Draw d="M1 2h14v12H1zM4 5l8 7" s={9} /></IconButton>
        </Toggles>
      </TimeHead>
      <LayerHeader>
        <MdVisibility size={8} /><MdVolumeUp size={8} /><Chip $c="#b4b4b4" $s={3} /><MdLock size={7} />
        <i /><MdLocalOffer size={7} /><span>#</span><i /><Start>图层名称</Start>
        <Shy /><Toggle /><Draw d="M3 2l10 12" s={7} /><Small><em>fx</em></Small>
        <Clapperboard size={7} fill="currentColor" /><Paperclip size={7} strokeWidth={3} />
        <Draw d="M8 1a7 7 0 1 0 0 14zM8 1a7 7 0 0 1 0 14" s={7} /><Timer size={7} />
        <i /><Start>&nbsp;模式</Start><Small>T</Small><i /><Start><Small>TrkMat</Small></Start><i />
        <Start $span={3}>&nbsp;父级和链接</Start>
      </LayerHeader>
      <CutRow><RotateCcw size={6} /><span>位置</span><span>1275.1,718.1</span></CutRow>
      <Rows>
        {layers.map((name, i) => {
          const sel = i === 6;
          return (
            <LayerRow key={name} $sel={sel}>
              <EyeButton /><i /><Box /><Box />
              {sel ? <ChevronDown size={6} /> : <ChevronRight size={6} />}
              <Chip $c="#6a7fe0" $s={8} /><Small>{i + 2}</Small><MdStar size={9} />
              <LayerName $edit={sel}>{name}</LayerName>
              <Shy /><Toggle /><Draw d="M13 2L3 14" s={8} /><i /><i /><Box /><Box /><Box />
              <i /><Select label="模式" value="正常" /><Box /><i /><Select label="TrkMat" value="无" /><i />
              <Spiral /><Select label="父级和链接" value="1. NULL CONTROL" fs={6} />
            </LayerRow>
          );
        })}
        <Prop depth={4} open name="内容" value={<AddCell>添加:<AddDot /></AddCell>} />
        <Prop depth={5} eye open name="组 1" value={<PropValue><Select label="组 1 模式" value="正常" /></PropValue>} />
        <Prop depth={6} eye sel name="路径 1" value={<PropValue><PathIcon c="#3b8fe0" /><PathIcon c="#b4b4b4" /></PropValue>} />
        <Prop depth={6} eye sel name="路径 2" value={<PropValue><PathIcon c="#3b8fe0" /><PathIcon c="#b4b4b4" /></PropValue>} />
        <Prop depth={6} eye name="填充 1" value={<PropValue><Select label="填充 1 模式" value="正常" /></PropValue>} />
        <Prop depth={6} name="变换: 组 1" />
      </Rows>
      <Footer>
        <IconButton $w={8} aria-label="Switches pane"><Layers size={7} color="#3b8fe0" /></IconButton>
        <IconButton $w={9} aria-label="Modes pane"><Link2 size={7} color="#3b8fe0" /></IconButton>
        <IconButton $w={9} aria-label="In and out pane"><Sparkle size={7} /></IconButton>
      </Footer>
    </LayerSide>
    <TrackSide>
      <TrackMain>
        <NavBar />
        <Ruler><RulerInner>{times.map((t) => <span key={t}>{t}</span>)}</RulerInner></Ruler>
        <WorkArea />
        <Cache />
        <TrackGap />
        <Tracks>
          {layers.map((n, i) => <Track key={n}><Bar $sel={i === 6} /></Track>)}
          {Array.from({ length: 6 }, (_, i) => <Track key={i} />)}
        </Tracks>
        <ZoomRow>
          <Draw d="M1 13l5-7 3 3 2-2 4 6z" fill s={6} />
          <label><Range aria-label="Timeline zoom" defaultValue={0} /></label>
          <Draw d="M0 14l5-8 3 3 3-5 5 10z" fill s={9} />
        </ZoomRow>
      </TrackMain>
      <TrackScroll>
        <Draw d="M2 1h12v9l-6 5-6-5z" fill s={8} />
        <Draw d="M0 8l7-7v4h8v7H7v3z" fill s={8} />
        <i />
      </TrackScroll>
      <Playhead />
    </TrackSide>
  </Timeline>
);

/* ---------- video overlays ---------- */
const Watermark = styled.div`
  position: absolute; right: 18px; top: 18px; display: flex; align-items: center; gap: 8px; z-index: 5;
  color: #d0d0d0; font: 500 20px/40px ${sans}; text-shadow: 0 0 2px #222; white-space: nowrap;
`;
const Logo = styled.text`font-family: Roboto, sans-serif; font-weight: 900; fill: #d0d0d0;`;
const Subtitle = styled.p`
  position: absolute; left: 0; right: 0; bottom: 16px; margin: 0; z-index: 5; text-align: center; pointer-events: none;
  font: 700 18px/27px ${sans}; color: #f4f4f4; text-shadow: 1px 1px 1px #111, -1px -1px 1px #111, 1px -1px 1px #111, -1px 1px 1px #111;
`;
const PlayerButton = styled.button`position: absolute; right: 19px; bottom: 57px; z-index: 5;`;

export default function App() {
  return (
    <>
      <Global />
      <Page>
        <TopBar />
        <Workspace>
          <ProjectColumn /><ViewerColumn /><MotionColumn /><AudioColumn />
        </Workspace>
        <TimelinePanel />
        <Watermark>
          太阳鸽鸽棒
          <svg width="73" height="36" viewBox="0 0 73 36" overflow="visible" role="img" aria-label="bilibili">
            <Logo y="30">
              <tspan fontSize="32" rotate="-5">b</tspan><tspan fontSize="23">ili</tspan><tspan fontSize="32" rotate="-5">b</tspan><tspan fontSize="23">ili</tspan>
            </Logo>
          </svg>
        </Watermark>
        <Subtitle>motion脚本的重命名功能</Subtitle>
        <PlayerButton aria-label="Open in player">
          <svg width="30" height="30" viewBox="0 0 30 30">
            <path d="M8 1l3 5M22 1l-3 5" stroke="#dcdcdc" strokeWidth="3" strokeLinecap="round" />
            <rect x="1" y="5" width="28" height="23" rx="5" fill="#dcdcdc" /><path d="M11 12q0-2 2-1l7 4q2 1 0 2l-7 4q-2 1-2-1z" fill="#222" />
          </svg>
        </PlayerButton>
      </Page>
    </>
  );
}
